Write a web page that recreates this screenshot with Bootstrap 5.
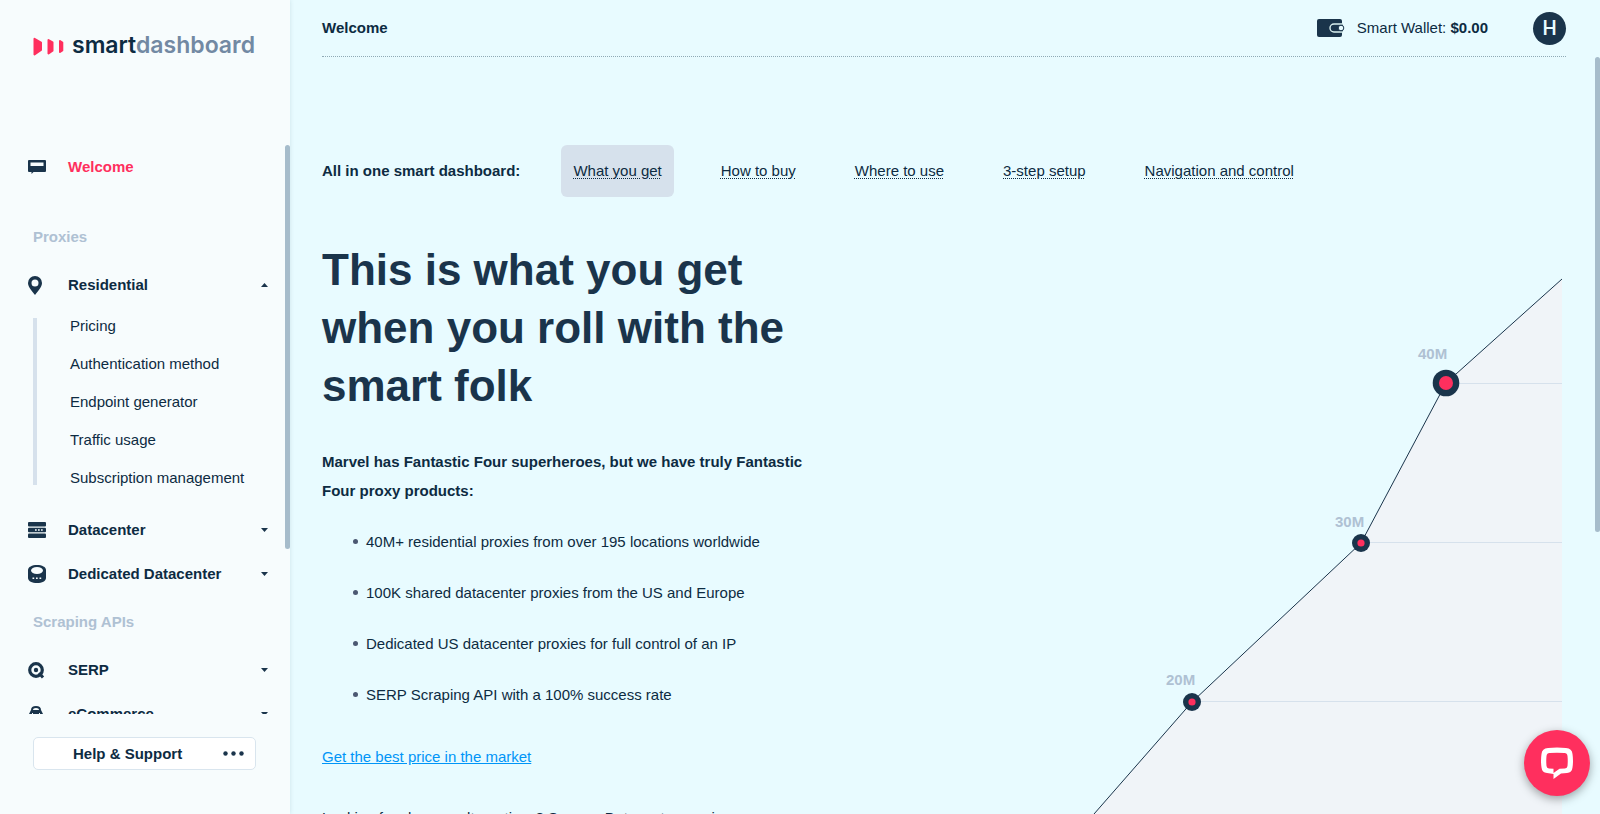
<!DOCTYPE html>
<html lang="en">
<head>
<meta charset="utf-8">
<meta name="viewport" content="width=device-width, initial-scale=1">
<title>Smart dashboard</title>
<link rel="stylesheet" href="https://cdn.jsdelivr.net/npm/bootstrap@5.3.0/dist/css/bootstrap.min.css">
<style>
  :root { --ink:#0d2b42; --navy:#1a344b; --pink:#ff2f5e; --muted:#afc1d3; --pale:#d6e1ec; }
  body { font-family:"Liberation Sans",Arial,sans-serif; font-size:15px; line-height:20px; color:var(--ink); background:#e8fbff; }
  .sidebar { width:290px; background:#f7fcfd; box-shadow:0 0 4px rgba(70,110,130,.18); z-index:1; }
  .brand { height:145px; padding:32px 33px 0; }
  .brand-name { font-family:Inter,sans-serif; font-size:23px; line-height:26px; font-weight:600; color:var(--ink); }
  .brand-name span { color:#7289a3; }
  .menu-area { min-height:0; flex-basis:0; margin-bottom:23px; }
  .menu-row { height:44px; padding:0 22px 0 28px; font-weight:700; color:var(--ink); background:none; border:0; text-align:left; text-decoration:none; }
  .menu-row .icon-cell { width:40px; display:flex; align-items:center; }
  .menu-row.current { color:var(--pink); margin-bottom:22px; }
  .menu-title { height:52px; line-height:52px; padding-left:33px; font-weight:700; color:var(--muted); }
  .tri { width:7px; height:4px; background:var(--navy); clip-path:polygon(0 0,100% 0,50% 100%); }
  .tri.up { clip-path:polygon(50% 0,100% 100%,0 100%); }
  .submenu { padding:0 0 11px 33px; }
  .submenu .rail { width:4px; margin:11px 33px 12px 0; background:var(--pale); }
  .submenu a { display:block; line-height:38px; color:var(--ink); text-decoration:none; }
  .thumb { width:5px; border-radius:3px; background:#a6bccb; }
  .help { height:33px; margin:0 34px 44px 33px; padding:0 11px 0 39px; background:#fff; border:1px solid #d9e5ee; border-radius:5px; font-weight:700; color:var(--ink); }
  .topbar { height:57px; margin:0 34px 0 32px; border-bottom:1px dotted #8fa9b5; }
  .avatar-dot { width:33px; height:33px; margin-left:45px; background:var(--navy); color:#e8fbff; border:0; font-family:Roboto,sans-serif; font-weight:500; font-size:20px; }
  .tabs { margin:88px 0 0 32px; height:52px; gap:35px; }
  .tabs strong { margin-right:6px; }
  .tabs a { height:52px; padding:0 12px; border-radius:6px; color:var(--ink); text-decoration:underline dotted 1px; text-underline-offset:2px; }
  .tabs a.active { background:var(--pale); }
  .copy { width:500px; padding:44px 0 0 32px; box-sizing:content-box; }
  .copy h1 { font-size:44px; line-height:58px; font-weight:700; color:var(--navy); margin:0 0 32px; }
  .copy p { line-height:29px; margin:0 0 22px; }
  .copy ul { margin:0 0 33px; padding-left:31px; line-height:29px; list-style:none; }
  .copy li { margin-bottom:22px; display:flex; align-items:center; gap:8px; }
  .copy li::before { content:""; width:5px; height:5px; border-radius:50%; background:#4b5872; }
  .copy .offer { margin-bottom:32px; }
  .copy p a { color:#0095f7; }
  .growth { margin:76px 38px 0 0; }
  .growth text { font-size:15px; font-weight:700; fill:var(--muted); }
  .chat { width:66px; height:66px; right:10px; bottom:18px; background:var(--pink); border:0; box-shadow:0 3px 10px rgba(0,0,0,.35); }
</style>
</head>
<body>
<div class="d-flex vh-100 overflow-hidden position-relative">
  <aside class="sidebar d-flex flex-column flex-shrink-0 position-relative">
    <div class="brand d-flex align-items-start flex-shrink-0">
      <svg class="flex-shrink-0 me-2" width="31" height="26" viewBox="0 0 31 26" fill="#ff2f5e" stroke="#ff2f5e" stroke-width="2" stroke-linejoin="round" aria-hidden="true"><path d="M1.500 6.800L8 10.500V18L1.500 22.500zM15.500 8L19.500 10.300V18.700L15.500 21.500zM27 9L29.300 10.500V18.500L27 20z"/></svg>
      <div class="brand-name">smart<span>dashboard</span></div>
    </div>
    <nav class="menu-area flex-grow-1 overflow-hidden position-relative">
      <a class="menu-row current d-flex align-items-center w-100" href="#"><span class="icon-cell"><svg width="18" height="14" viewBox="0 0 18 14"><path fill="#1a344b" fill-rule="evenodd" d="M1 0h16q1 0 1 1v10q0 1-1 1H5.500L3.500 14V12H1q-1 0-1-1V1q0-1 1-1zM2.500 2.500v3.500h13v-3.500z"/></svg></span>Welcome</a>
      <div class="menu-title">Proxies</div>
      <button class="menu-row d-flex align-items-center w-100" type="button"><span class="icon-cell"><svg width="14" height="19" viewBox="0 0 14 19"><path fill="#1a344b" fill-rule="evenodd" d="M7 0a7 7 0 0 1 7 7c0 4-4 8-7 12C4 15 0 11 0 7a7 7 0 0 1 7-7zm0 3.500a3.500 3.500 0 1 0 0 7 3.500 3.500 0 0 0 0-7z"/></svg></span>Residential<span class="tri up ms-auto"></span></button>
      <div class="submenu d-flex">
        <div class="rail"></div>
        <div><a href="#">Pricing</a><a href="#">Authentication method</a><a href="#">Endpoint generator</a><a href="#">Traffic usage</a><a href="#">Subscription management</a></div>
      </div>
      <button class="menu-row d-flex align-items-center w-100" type="button"><span class="icon-cell"><svg width="18" height="16" viewBox="0 0 18 16"><g fill="#1a344b"><rect width="18" height="4.500" rx="1"/><rect y="5.700" width="18" height="4.600" rx="1"/><rect y="11.500" width="18" height="4.500" rx="1"/></g><path fill="#f7fcfd" d="M7 7.200h1.700v1.600H7zM10 7.200h1.700v1.600h-1.700zM13 7.200h1.700v1.600h-1.700z"/></svg></span>Datacenter<span class="tri ms-auto"></span></button>
      <button class="menu-row d-flex align-items-center w-100" type="button"><span class="icon-cell"><svg width="18" height="18" viewBox="0 0 18 18"><path fill="#1a344b" d="M0 5c0-3 4-5 9-5s9 2 9 5v8c0 3-4 5-9 5s-9-2-9-5z"/><ellipse cx="9" cy="5.500" rx="6" ry="3.500" fill="#f7fcfd"/><path fill="#f7fcfd" d="M4.500 12.500h1.700v1.600h-1.700zM8 12.500h1.700v1.600H8zM11.500 12.500h1.700v1.600h-1.700z"/></svg></span>Dedicated Datacenter<span class="tri ms-auto"></span></button>
      <div class="menu-title">Scraping APIs</div>
      <button class="menu-row d-flex align-items-center w-100" type="button"><span class="icon-cell"><svg width="17" height="17" viewBox="0 0 17 17"><circle cx="8" cy="8" r="6.300" fill="none" stroke="#1a344b" stroke-width="3.200"/><circle cx="8" cy="8" r="2.200" fill="#1a344b"/><path d="M11 11l4 4.500" stroke="#1a344b" stroke-width="3"/></svg></span>SERP<span class="tri ms-auto"></span></button>
      <button class="menu-row d-flex align-items-center w-100" type="button"><span class="icon-cell"><svg width="16" height="17" viewBox="0 0 16 17"><path d="M4 6V4q0-3 4-3t4 3v2" fill="none" stroke="#1a344b" stroke-width="2"/><path fill="#1a344b" d="M3 4h10l2 4v8H1V8z"/><path fill="#f7fcfd" d="M4 7h1v3H4zM11 7h1v3h-1z"/></svg></span>eCommerce<span class="tri ms-auto"></span></button>
      <div class="thumb position-absolute top-0 end-0" style="height:71%"></div>
    </nav>
    <button class="help d-flex align-items-center justify-content-between flex-shrink-0" type="button">Help &amp; Support
      <svg width="21" height="5" viewBox="0 0 21 5" fill="#1a344b" aria-hidden="true"><circle cx="2.500" cy="2.500" r="2.200"/><circle cx="10.500" cy="2.500" r="2.200"/><circle cx="18.500" cy="2.500" r="2.200"/></svg>
    </button>
  </aside>

  <main class="flex-grow-1 overflow-hidden position-relative">
    <header class="topbar d-flex align-items-center">
      <strong>Welcome</strong>
      <svg class="ms-auto me-2" width="32" height="18" viewBox="0 0 32 18" aria-hidden="true"><rect width="25" height="18" rx="2" fill="#1a344b"/><path d="M26 5H17a4 4 0 0 0 0 8h9" fill="#1a344b" stroke="#d9efef" stroke-width="1.400"/><circle cx="24" cy="9" r="2.800" fill="#e8fbff" stroke="#1a344b"/></svg>
      <span>Smart Wallet: <strong>$0.00</strong></span>
      <button class="avatar-dot rounded-circle p-0" type="button" aria-label="Account">H</button>
    </header>

    <nav class="tabs d-flex align-items-center">
      <strong>All in one smart dashboard:</strong>
      <a class="active d-flex align-items-center" href="#">What you get</a>
      <a class="d-flex align-items-center" href="#">How to buy</a>
      <a class="d-flex align-items-center" href="#">Where to use</a>
      <a class="d-flex align-items-center" href="#">3-step setup</a>
      <a class="d-flex align-items-center" href="#">Navigation and control</a>
    </nav>

    <div class="d-flex align-items-start justify-content-between">
      <section class="copy flex-shrink-0">
        <h1>This is what you get when you roll with the smart folk</h1>
        <p><strong>Marvel has Fantastic Four superheroes, but we have truly Fantastic Four proxy products:</strong></p>
        <ul>
          <li>40M+ residential proxies from over 195 locations worldwide</li>
          <li>100K shared datacenter proxies from the US and Europe</li>
          <li>Dedicated US datacenter proxies for full control of an IP</li>
          <li>SERP Scraping API with a 100% success rate</li>
        </ul>
        <p class="offer"><a href="#">Get the best price in the market</a></p>
        <p>Looking for cheaper alternatives? See our Datacenter proxies</p>
      </section>
      <svg class="growth flex-shrink-0" width="562" height="640" viewBox="1000 273 562 640" role="img" aria-label="Proxy pool growth">
        <path d="M1562 279L1446 383 1361 543 1192 702 1010 910H1562z" fill="#f0f4f8"/>
        <path d="M1446 383.500H1562M1361 542.500H1562M1192 701.500H1562" stroke="#d6e1ec"/>
        <path d="M1562 279L1446 383 1361 543 1192 702 1010 910" fill="none" stroke="#1a344b"/>
        <g fill="#1a344b"><circle cx="1446" cy="383" r="13.300"/><circle cx="1361" cy="543" r="9"/><circle cx="1192" cy="702" r="9"/></g>
        <g fill="#ff2f5e"><circle cx="1446" cy="383" r="7"/><circle cx="1361" cy="543" r="3.600"/><circle cx="1192" cy="702" r="3.600"/></g>
        <text x="1418" y="359">40M</text><text x="1335" y="527">30M</text><text x="1166" y="685">20M</text>
      </svg>
    </div>
    <div class="thumb position-absolute end-0" style="top:7%;height:58.400%"></div>
  </main>

  <button class="chat rounded-circle position-absolute d-flex align-items-center justify-content-center p-0" type="button" aria-label="Open chat">
    <svg width="32" height="32" viewBox="0 0 32 32"><path fill="#fff" fill-rule="evenodd" d="M7 1Q16 0 25 1Q31 1.500 31.500 7Q32.500 14 31.500 20.500Q31 25.500 26 26L20 26.500L12.500 32V27L6 26Q1 25.500 .5 20.500Q-.5 14 .5 7Q1 1.500 7 1zM8.500 6Q5.800 6.200 5.500 9Q5 14 5.500 19Q5.700 21.200 8 21.400L12.500 21.700V26L18.500 21.800L24 21.400Q26.300 21.200 26.500 19Q27 14 26.500 9Q26.200 6.200 23.500 6Q16 5.300 8.500 6z"/></svg>
  </button>
</div>
<script src="https://cdn.jsdelivr.net/npm/bootstrap@5.3.0/dist/js/bootstrap.bundle.min.js"></script>
</body>
</html>
